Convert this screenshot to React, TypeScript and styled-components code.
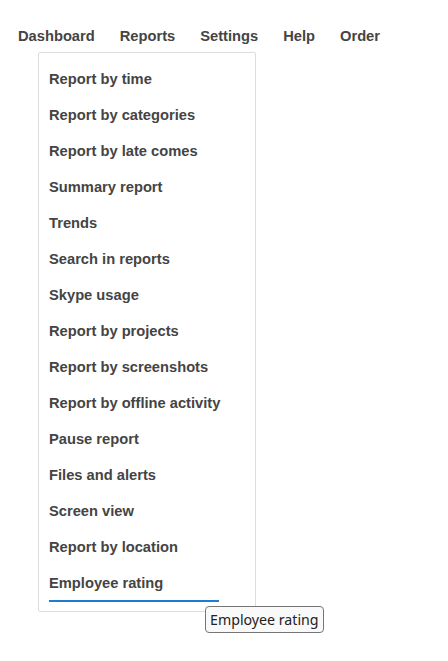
import React from 'react';
import styled, { createGlobalStyle } from 'styled-components';

const GlobalStyle = createGlobalStyle`
  html, body {
    margin: 0;
    padding: 0;
    background: #ffffff;
  }
  body {
    font-family: "Liberation Sans", Arial, sans-serif;
  }
`;

const topItems = ['Dashboard', 'Reports', 'Settings', 'Help', 'Order'];

const reportItems = [
  'Report by time',
  'Report by categories',
  'Report by late comes',
  'Summary report',
  'Trends',
  'Search in reports',
  'Skype usage',
  'Report by projects',
  'Report by screenshots',
  'Report by offline activity',
  'Pause report',
  'Files and alerts',
  'Screen view',
  'Report by location',
  'Employee rating',
];

const Page = styled.div`
  position: relative;
  width: 448px;
  height: 661px;
  overflow: hidden;
`;

const NavBar = styled.nav`
  display: flex;
  align-items: center;
  gap: 25px;
  padding: 28px 0 0 18px;
`;

const NavLink = styled.a`
  font-size: 14.7px;
  font-weight: bold;
  line-height: 16px;
  color: #444444;
  text-decoration: none;
  cursor: pointer;
`;

const Dropdown = styled.ul`
  position: absolute;
  left: 38px;
  top: 52px;
  width: 216px;
  margin: 0;
  padding: 9px 0 9px 0;
  list-style: none;
  background: #ffffff;
  border: 1px solid #dddddd;
  border-radius: 2px;
`;

const DropItem = styled.li<{ $active?: boolean }>`
  width: 170px;
  margin-left: 10px;
  height: 34px;
  line-height: 34px;
  font-size: 14.7px;
  font-weight: bold;
  color: #444444;
  white-space: nowrap;
  border-bottom: 2px solid ${p => (p.$active ? '#1a7dd0' : 'transparent')};
  cursor: pointer;
`;

const Tooltip = styled.div`
  position: absolute;
  left: 205px;
  top: 606px;
  padding: 3px 4px 3px 4px;
  font-family: "Noto Sans", "Open Sans", sans-serif;
  font-size: 14.2px;
  line-height: 19px;
  color: #222222;
  background: #f9f9f9;
  border: 1px solid #767676;
  border-radius: 4px;
  white-space: nowrap;
`;

export default function App() {
  return (
    <Page>
      <GlobalStyle />
      <NavBar>
        {topItems.map(item => (
          <NavLink key={item}>{item}</NavLink>
        ))}
      </NavBar>
      <Dropdown>
        {reportItems.map((item, i) => (
          <DropItem key={item} $active={i === reportItems.length - 1}>
            {item}
          </DropItem>
        ))}
      </Dropdown>
      <Tooltip>Employee rating</Tooltip>
    </Page>
  );
}
